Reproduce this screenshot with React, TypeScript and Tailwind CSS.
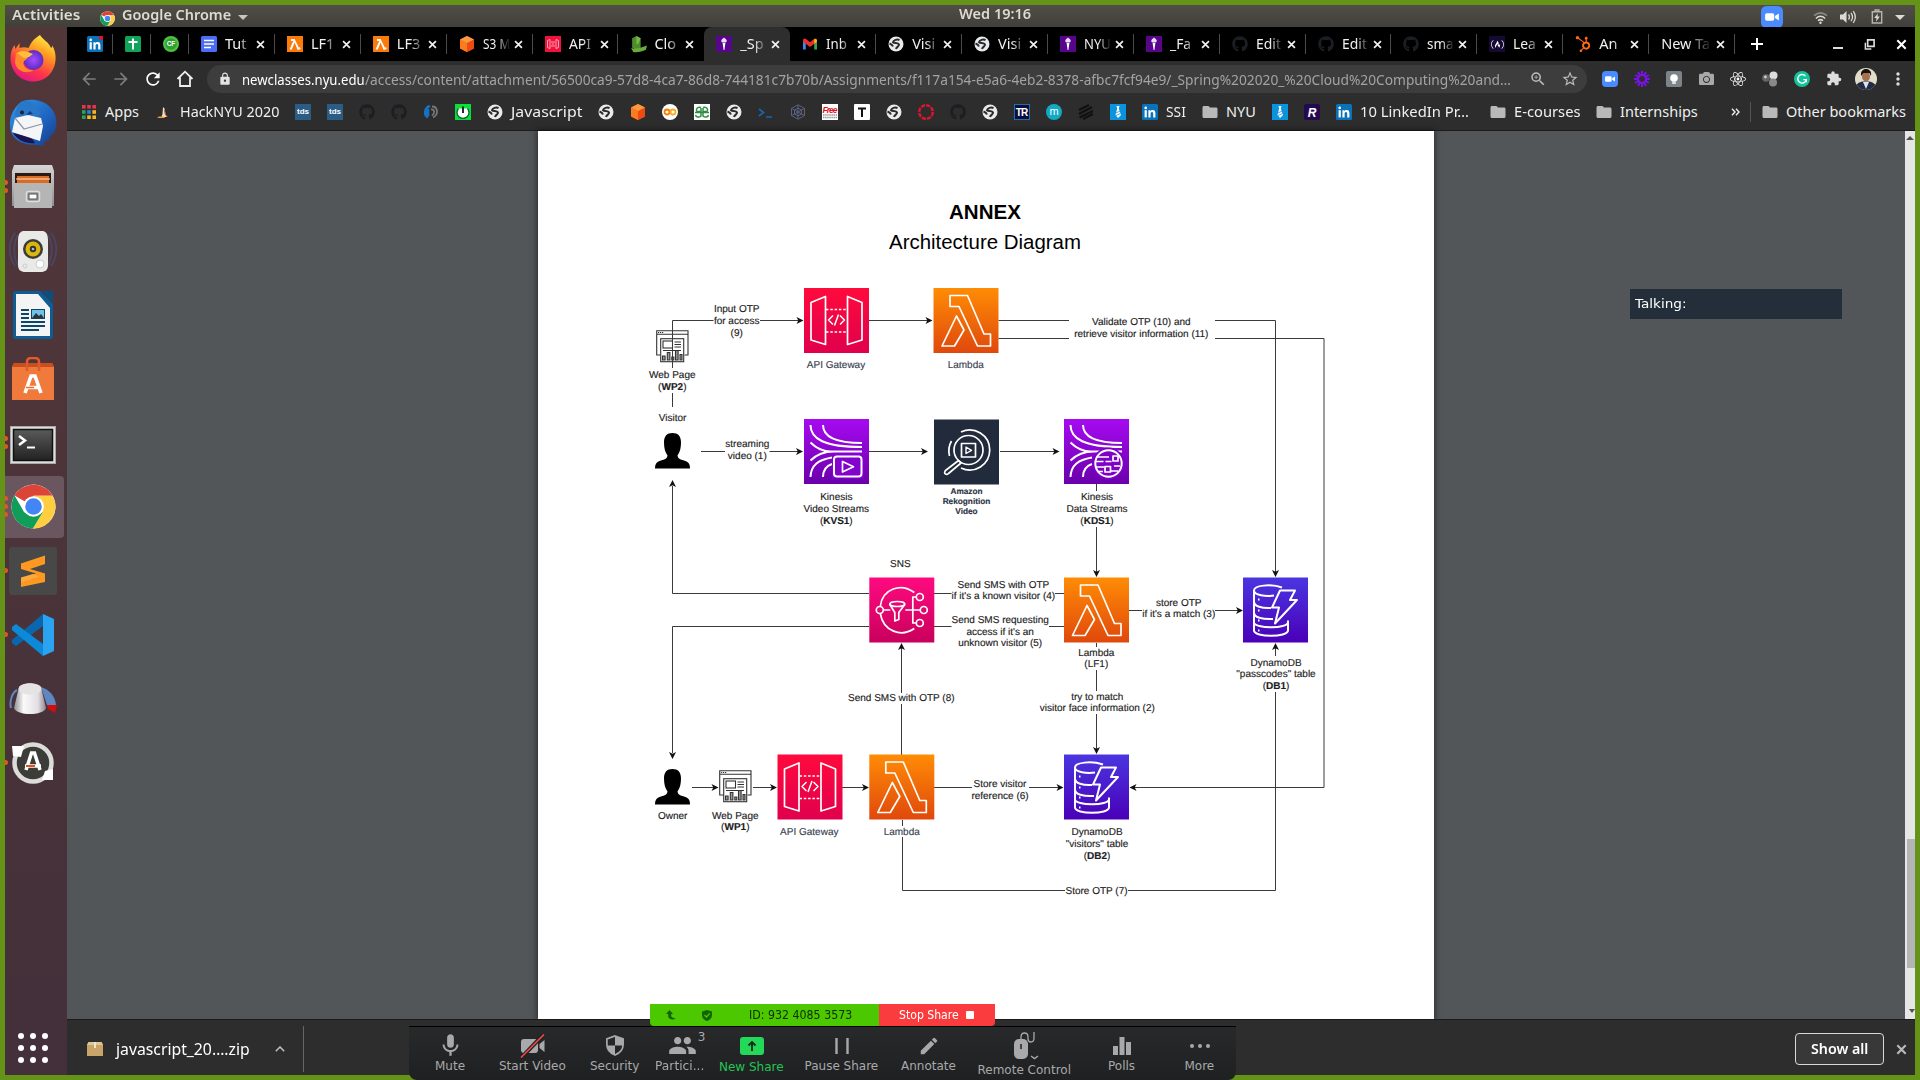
import React, { useLayoutEffect, useRef, useState } from "react";
import { FaGithub, FaReact, FaHubspot, FaFreeCodeCamp, FaCamera } from "react-icons/fa";
import { MdArrowBack, MdArrowForward, MdRefresh, MdLock, MdZoomIn, MdStarBorder, MdMoreVert, MdExtension, MdFolder, MdMic, MdPeople, MdEdit } from "react-icons/md";

/* Single-line text condensed or expanded horizontally to an exact width. */
function Fit({ w, className = "", children }: { w: number; className?: string; children: React.ReactNode }) {
  const ref = useRef<HTMLSpanElement>(null);
  const [scale, setScale] = useState(1);
  useLayoutEffect(() => {
    const el = ref.current;
    if (el && el.offsetWidth > 0) setScale(w / el.offsetWidth);
  }, [w]);
  return (
    <span className="inline-block shrink-0" style={{ width: w }}>
      <span ref={ref} className={"inline-block origin-left whitespace-nowrap " + className} style={{ transform: `scaleX(${scale})` }}>
        {children}
      </span>
    </span>
  );
}

/* ---------- small favicons (16x16) ---------- */
const Svg16 = ({ children, s = "size-4" }: { children: React.ReactNode; s?: string }) => (
  <svg viewBox="0 0 16 16" className={s + " shrink-0"}>{children}</svg>
);
const LinkedIn = ({ dot }: { dot?: boolean }) => (
  <Svg16>
    <rect width="16" height="16" rx="1.5" fill="#0a72b8" />
    <rect x="2.6" y="6.2" width="2.2" height="7.2" fill="#fff" />
    <circle cx="3.7" cy="3.9" r="1.3" fill="#fff" />
    <path d="M6.4 6.2h2.1v1c.4-.7 1.2-1.2 2.2-1.2 2 0 2.7 1.2 2.7 3.3v4.1h-2.2V9.8c0-1-.3-1.8-1.2-1.8-1 0-1.4.8-1.4 1.8v3.6H6.4z" fill="#fff" />
    {dot && <circle cx="14" cy="1.8" r="2.2" fill="#e8112d" />}
  </Svg16>
);
const Sheets = () => (
  <Svg16><rect width="16" height="16" rx="1.5" fill="#0fa45a" /><path d="M8 2.5v11M3.5 6h9" stroke="#fff" strokeWidth="2" /></Svg16>
);
const CF = () => (
  <Svg16><circle cx="8" cy="8" r="8" fill="#4fc23f" /><circle cx="8" cy="8" r="5.800" fill="#2f9e35" /><text x="8" y="10.4" textAnchor="middle" fontSize="6.5" fontWeight="bold" fill="#fff" fontFamily="Liberation Sans">CF</text></Svg16>
);
const Docs = () => (
  <Svg16><rect width="16" height="16" rx="1.5" fill="#4a6cf7" /><path d="M3 4.5h10M3 8h10M3 11.5h7" stroke="#fff" strokeWidth="1.7" /></Svg16>
);
const LambdaFav = () => (
  <Svg16><rect width="16" height="16" fill="#fa7a0a" /><path d="M4 3h3.6l4.2 8.6 1.3-.4.6 1.8-3 1L7.600 6.500 4.800 13.500H2.500L6.300 5H4z" fill="#fff" /></Svg16>
);
const S3 = () => (
  <Svg16><path d="M8 0l7 3.600v8.800L8 16l-7-3.600V3.600z" fill="#f4511e" /><path d="M8 0l7 3.600-7 3.600-7-3.600z" fill="#fb9a3c" /><path d="M8 7.200l7-3.600v8.800L8 16z" fill="#ee4b12" /><path d="M1 3.600l7 3.600V16l-7-3.600z" fill="#fb7c1e" /></Svg16>
);
const ApiFav = () => (
  <Svg16><rect width="16" height="16" fill="#f0123c" /><path d="M5 3.500L2.500 4.500v7L5 12.500zM11 3.500l2.500 1v7l-2.500 1zM6 6h4M6 10h4M6.800 8h2.400" stroke="#ffb0bd" strokeWidth=".9" fill="none" /></Svg16>
);
const CloudFav = () => (
  <Svg16 s="size-[17px]"><path d="M6 0l4 2v9L6 13 2 11V2z" fill="#4b8f2c" /><path d="M6 0l4 2-2 5-2 1z" fill="#7ab648" /><path d="M1 11c4 2 10 0 15-2l-1 4c-4 2-9 3-12 2z" fill="#69ac3c" /></Svg16>
);
const Torch = () => (
  <Svg16><rect width="16" height="16" fill="#57068c" /><path d="M8 1.500c1 1 2.200 1.200 2.400 2.600.8.300.5 1.800-.6 2.300H6.200C5 5.900 4.900 4.600 5.700 4.100 5.700 2.900 7.200 2.800 8 1.500z" fill="#e9dcf2" /><path d="M6.600 7h2.800L8.400 14h-.8z" fill="#fff" /></Svg16>
);
const Gmail = () => (
  <Svg16><path d="M1 4v9.500h2.800V6.200z" fill="#4285f4" /><path d="M15 4v9.500h-2.800V6.200z" fill="#34a853" /><path d="M1 4.200C1 2.400 3 2 4 3l4 3.200L12 3c1-1 3-.6 3 1.200v1.500L8 11 1 5.700z" fill="#ea2f2f" /><path d="M12.200 3l2 .3.800 1v1.500l-2.800 2z" fill="#fbbc04" /></Svg16>
);
const Globe = () => (
  <Svg16><circle cx="8" cy="8" r="7.500" fill="#e8eaed" /><path d="M11.500 4C9 2.800 5.500 4 5 6.200c1.500 1.300 5 .3 6 2.300.3 2-2.500 2-3 4.500M1.500 7.500C3 8 4.500 9 5 10.500" fill="none" stroke="#2a2a2a" strokeWidth="2" /></Svg16>
);
const Git = () => <FaGithub className="size-4 shrink-0 text-[#1b1f23]" />;
const FCC = () => (
  <span className="flex size-4 shrink-0 items-center justify-center bg-[#150a33] text-white"><FaFreeCodeCamp className="size-[13px]" /></span>
);

/* ---------- tab strip ---------- */
const tabs: { icon?: React.ReactNode; t: string; w: number; active?: boolean; noSep?: boolean }[] = [
  { icon: <Docs />, t: "Tut", w: 22 },
  { icon: <LambdaFav />, t: "LF1", w: 23 },
  { icon: <LambdaFav />, t: "LF3", w: 23 },
  { icon: <S3 />, t: "S3 M", w: 27 },
  { icon: <ApiFav />, t: "API", w: 22 },
  { icon: <CloudFav />, t: "Clo", w: 22, noSep: true },
  { icon: <Torch />, t: "_Sp", w: 23, active: true, noSep: true },
  { icon: <Gmail />, t: "Inb", w: 21 },
  { icon: <Globe />, t: "Visi", w: 23 },
  { icon: <Globe />, t: "Visi", w: 23 },
  { icon: <Torch />, t: "NYU", w: 27 },
  { icon: <Torch />, t: "_Fa", w: 21 },
  { icon: <Git />, t: "Edit", w: 25 },
  { icon: <Git />, t: "Edit", w: 25 },
  { icon: <Git />, t: "sma", w: 27 },
  { icon: <FCC />, t: "Lea", w: 23 },
  { icon: <FaHubspot className="size-4 shrink-0 text-[#ff6a13]" />, t: "An", w: 18 },
  { t: "New Ta", w: 49 },
];
const Cross = ({ c = "size-[9px]" }: { c?: string }) => (
  <svg viewBox="0 0 10 10" className={c + " shrink-0"}><path d="M1.200 1.200l7.600 7.600M8.800 1.200L1.200 8.800" stroke="currentColor" strokeWidth="1.900" /></svg>
);
function TabStrip() {
  return (
    <div className="flex h-[34px] shrink-0 items-center bg-black pl-2 font-['Noto_Sans',sans-serif] text-[14.500px] text-[#f1f1f1]">
      {[<LinkedIn dot />, <Sheets />, <CF />].map((ic, i) => (
        <div key={i} className="flex h-5 w-[38px] shrink-0 items-center justify-center border-r border-[#4a4a4a] pl-0.5">{ic}</div>
      ))}
      {tabs.map((t, i) => (
        <div key={i} className={"flex h-full w-[85.900px] shrink-0 items-center " + (t.active ? "rounded-t-lg bg-[#2e2e2e]" : "")}>
          <div className={"flex h-5 w-full items-center border-r pl-3 " + (t.noSep ? "border-transparent" : "border-[#4a4a4a]")}>
            {t.icon && <span className="mr-2 flex w-4 shrink-0">{t.icon}</span>}
            <span className={"flex [mask-image:linear-gradient(to_right,black_50%,transparent_98%)] " + (t.icon ? "w-[28px]" : "w-[52px]")}><Fit w={t.w}>{t.t}</Fit></span>
            <span className="ml-[3px] flex"><Cross /></span>
          </div>
        </div>
      ))}
      <svg viewBox="0 0 12 12" className="ml-4 size-3 shrink-0"><path d="M6 0v12M0 6h12" stroke="#fff" strokeWidth="2" /></svg>
      <div className="ml-auto flex items-center pr-2 text-white">
        <div className="mt-2 h-[2px] w-2.5 bg-[#ddd]" />
        <svg viewBox="0 0 12 12" className="mx-[21px] size-[11px]"><path d="M4 1h7v7H4z" fill="none" stroke="#ddd" strokeWidth="1.800" /><path d="M1.500 4v6.800H8" fill="none" stroke="#ddd" strokeWidth="1.600" /></svg>
        <Cross c="size-[11px]" />
      </div>
    </div>
  );
}

/* ---------- toolbar ---------- */
const ZoomFav = ({ s = "size-4" }: { s?: string }) => (
  <Svg16 s={s}><rect width="16" height="16" rx="4" fill="#4a8cff" /><rect x="3" y="5.300" width="6.600" height="5.400" rx="1.200" fill="#fff" /><path d="M10.200 7.200l2.800-1.800v5.200l-2.800-1.800z" fill="#fff" /></Svg16>
);
function Toolbar() {
  const ext = [
    <ZoomFav />,
    <Svg16><g stroke="#7a12e8" strokeWidth="2">{[0, 30, 60, 90, 120, 150].map((a) => <path key={a} d="M8 0v5M8 11v5" transform={`rotate(${a} 8 8)`} />)}</g><circle cx="8" cy="8" r="4" fill="none" stroke="#7a12e8" strokeWidth="2" /></Svg16>,
    <Svg16><rect width="16" height="16" rx="2" fill="#7d8489" /><circle cx="8" cy="7" r="3.800" fill="#fff" /><path d="M6.200 10h3.600v3H6.200z" fill="#dfe3e6" /></Svg16>,
    <FaCamera className="size-[15px] text-[#a8a8a8]" />,
    <FaReact className="size-4 text-white" />,
    <Svg16><circle cx="4" cy="7" r="3.800" fill="#666" /><circle cx="3.400" cy="6" r="1.400" fill="#ccc" /><circle cx="11.500" cy="4.500" r="4" fill="#ddd" /><circle cx="11" cy="11.500" r="4" fill="#888" /></Svg16>,
    <Svg16><circle cx="8" cy="8" r="8" fill="#15c39a" /><path d="M11.500 5.200A4.300 4.300 0 1 0 12.300 8.600H9.400M12.300 8.600v2.600" fill="none" stroke="#fff" strokeWidth="1.400" /></Svg16>,
    <MdExtension className="size-[17px] text-[#ddd]" />,
  ];
  return (
    <div className="flex h-9 shrink-0 items-center bg-[#2d2d2d] pb-px font-['Noto_Sans',sans-serif]">
      <MdArrowBack className="ml-3 size-5 text-[#7c7c7c]" />
      <MdArrowForward className="ml-3 size-5 text-[#7c7c7c]" />
      <MdRefresh className="ml-3 size-5 text-white" />
      <svg viewBox="0 0 20 20" className="ml-3 size-5"><path d="M2.500 10L10 2.700 17.500 10M5 8.500V17h10V8.500" fill="none" stroke="#eee" strokeWidth="1.800" /></svg>
      <div className="ml-3 flex h-7 w-[1380px] items-center rounded-full bg-[#3d3d3d] pr-2 pl-[11px]">
        <MdLock className="size-[14px] text-[#e4e4e4]" />
        <span className="ml-[10px] flex">
          <Fit w={123} className="text-[14px] text-white">newclasses.nyu.edu</Fit>
          <Fit w={1146} className="text-[14px] text-[#a3a3a3]">/access/content/attachment/56500ca9-57d8-4ca7-86d8-744181c7b70b/Assignments/f117a154-e5a6-4eb2-8378-afbc7fcf94e9/_Spring%202020_%20Cloud%20Computing%20and…</Fit>
        </span>
        <MdZoomIn className="ml-auto size-[18px] text-[#bbb]" />
        <MdStarBorder className="ml-[14px] size-[18px] text-[#bbb]" />
      </div>
      <div className="ml-[15px] flex items-center gap-4">
        {ext.map((e, i) => <span key={i} className="flex size-4 items-center justify-center">{e}</span>)}
      </div>
      <svg viewBox="0 0 22 22" className="ml-[13px] size-[22px]">
        <clipPath id="avatar"><circle cx="11" cy="11" r="11" /></clipPath>
        <g clipPath="url(#avatar)"><rect width="22" height="22" fill="#e2ddc8" /><path d="M0 22c0-6 4-8 8-8.500h6c4 .5 8 3 8 8.500z" fill="#232c44" /><path d="M8 14l3 7 3-7z" fill="#dbe4f5" /><ellipse cx="11" cy="8.500" rx="4" ry="5" fill="#a66f4e" /><path d="M6 8c-.5-5 2-7 5-7s6 2 5 7l-1.500-3h-6z" fill="#17110f" /></g>
      </svg>
      <MdMoreVert className="ml-[11px] size-5 text-[#ddd]" />
    </div>
  );
}

/* ---------- bookmarks ---------- */
const Tds = () => <span className="flex size-4 items-center justify-center bg-[#2b5c85] font-['Liberation_Sans',sans-serif] text-[8px] font-bold text-white">tds</span>;
const BlueTie = () => <Svg16><rect width="16" height="16" fill="#0b93de" /><path d="M6.500 2h3l-.7 2.500L11 11l-3 3-2.500-3L7.200 4.500z" fill="#fff" /><path d="M6 9l4-2M6 11.500l4.500-2" stroke="#0b93de" strokeWidth=".8" /></Svg16>;
const Folder = () => <MdFolder className="size-[18px] shrink-0 text-[#b9b9b9]" />;
const marks: { i: React.ReactNode; t?: string; w?: number; pad?: string }[] = [
  { pad: "pr-px", i: <Svg16>{["#e8344a", "#e8344a", "#e8344a", "#26a65b", "#2f7de1", "#f5b81c", "#26a65b", "#f5b81c", "#f5b81c"].map((c, k) => <rect key={k} x={1 + (k % 3) * 5.200} y={1 + Math.floor(k / 3) * 5.200} width="3.600" height="3.600" fill={c} />)}</Svg16>, t: "Apps", w: 34 },
  { i: <Svg16><path d="M7 3l1.500 1.500 1 6 1.500 2.500H5.500l1-3z" fill="#f2e3c4" /><path d="M1 14h8l-1-1.500H3z" fill="#e8a33d" /><path d="M8.500 6l.8 4.500 2.200 2.500" stroke="#b3532a" fill="none" /></Svg16>, t: "HackNYU 2020", w: 99 },
  { i: <Tds /> }, { i: <Tds /> }, { i: <Git /> }, { i: <Git /> },
  { i: <Svg16><path d="M7 2C1 4 1 11 5 13.500M5 5v7" fill="none" stroke="#1673c4" strokeWidth="2.600" /><path d="M9 2.500c6 0 7 8 1 11M8 5.500c4-.5 4 4 1 6" fill="none" stroke="#777" strokeWidth="1.800" /></Svg16> },
  { i: <Svg16><rect width="16" height="16" fill="#0be03a" /><path d="M3.500 4.500a6 6 0 1 0 9 0" fill="#fff" stroke="#063" strokeWidth="1.300" /><path d="M8 2.500v6.500" stroke="#111" strokeWidth="1.800" /></Svg16> },
  { i: <Globe />, t: "Javascript", w: 71 },
  { i: <Globe /> }, { i: <S3 /> },
  { i: <Svg16><circle cx="8" cy="8" r="8" fill="#fff" /><circle cx="5" cy="8" r="2.500" fill="none" stroke="#f57c00" strokeWidth="1.800" /><circle cx="11" cy="8" r="2.500" fill="none" stroke="#fbab1c" strokeWidth="1.800" /></Svg16> },
  { i: <Svg16><rect width="16" height="16" fill="#fff" /><path d="M7 3.500C3 2 1.500 6 3 7.500h4V4M7 9v3C5 14 2 13 1.500 11M9 3.500c4-1.500 5.500 2.500 4 4H9V4M9 9v3c2 2 5 1 5.500-1M1 8.500h14" fill="none" stroke="#2f8d46" strokeWidth="1.500" /></Svg16> },
  { i: <Globe /> },
  { i: <Svg16><path d="M1 5l4.500 3.500L1 12" fill="none" stroke="#1864ab" strokeWidth="1.800" /><path d="M8 13h6" stroke="#1864ab" strokeWidth="1.500" /></Svg16> },
  { i: <Svg16><path d="M8 .8l6.500 3.600v7.200L8 15.200l-6.500-3.600V4.400zM8 4l3.500 2v4L8 12l-3.500-2V6zM1.500 4.400l13 7.200M14.500 4.400l-13 7.200M8 1v14" fill="none" stroke="#5b6080" strokeWidth="1" /></Svg16> },
  { i: <Svg16><rect width="16" height="16" fill="#fff" /><text x="8" y="8.500" textAnchor="middle" textLength="15" fontSize="8.500" fontWeight="bold" fontStyle="italic" fill="#e01020" fontFamily="Liberation Sans">Free</text><path d="M1 11h14M1 13.500h14" stroke="#999" strokeWidth="1.400" strokeDasharray="1.500 .6" /></Svg16> },
  { i: <Svg16><rect width="16" height="16" rx="1" fill="#fff" /><path d="M4 4.500h8M8 4.500V13" stroke="#111" strokeWidth="2" /></Svg16> },
  { i: <Globe /> },
  { i: <Svg16><circle cx="8" cy="8" r="6.800" fill="none" stroke="#e0142d" strokeWidth="2.400" strokeDasharray="4.200 1.140" /></Svg16> },
  { i: <Git /> }, { i: <Globe /> },
  { i: <Svg16><rect x=".5" y=".5" width="15" height="15" fill="#0d0c3a" stroke="#1f6fa8" /><text x="8" y="11.800" textAnchor="middle" fontSize="10" fontWeight="bold" fill="#fff" fontFamily="Liberation Sans" textLength="12.500">TR</text></Svg16> },
  { i: <Svg16><circle cx="8" cy="8" r="8" fill="#12a9c4" /><text x="8" y="11.300" textAnchor="middle" fontSize="11" fill="#fff" fontFamily="Liberation Sans">m</text></Svg16> },
  { i: <Svg16><path d="M1 6l10-5M1 10L14 3M1.500 13.500L15 7M5 15l10-5" stroke="#111" strokeWidth="2" /></Svg16> },
  { i: <BlueTie /> },
  { i: <LinkedIn />, t: "SSI", w: 20 },
  { i: <Folder />, t: "NYU", w: 30 },
  { i: <BlueTie /> },
  { i: <Svg16><rect width="16" height="16" rx="2" fill="#25094f" /><text x="8" y="12.500" textAnchor="middle" fontSize="12" fontWeight="bold" fontStyle="italic" fill="#fff" fontFamily="Liberation Sans">R</text></Svg16> },
  { i: <LinkedIn />, t: "10 LinkedIn Pr…", w: 109, pad: "pr-[5px]" },
  { i: <Folder />, t: "E-courses", w: 66 },
  { i: <Folder />, t: "Internships", w: 78 },
];
function Bookmarks() {
  return (
    <div className="flex h-[34px] shrink-0 items-center gap-4 border-b border-[#1c1c1c] bg-[#2d2d2d] pb-1 pl-[14px] font-['Noto_Sans',sans-serif] text-[14.500px] text-[#f0f0f0]">
      {marks.map((m, k) => (
        <div key={k} className={"flex shrink-0 items-center gap-2 " + (m.pad ?? "")}>
          <span className="flex size-4 items-center justify-center">{m.i}</span>
          {m.t && <Fit w={m.w!}>{m.t}</Fit>}
        </div>
      ))}
      <div className="ml-auto flex items-center pr-[9px]">
        <svg viewBox="0 0 9 8" className="h-2 w-[9px]"><path d="M1 .8L4 4 1 7.200M5 .8L8 4 5 7.200" fill="none" stroke="#eee" strokeWidth="1.400" /></svg>
        <span className="ml-[10px] h-5 w-px bg-[#555]" />
        <span className="mr-[7px] ml-[10px]"><Folder /></span>
        <Fit w={120}>Other bookmarks</Fit>
      </div>
    </div>
  );
}

/* ---------- dock ---------- */
const ChromeLogo = ({ c }: { c: string }) => (
  <svg viewBox="0 0 48 48" className={c}>
    <circle cx="24" cy="24" r="23.500" fill="#fff" />
    <path d="M24 24L3.800 12.200A23.500 23.500 0 0 1 44.300 12.500H24z" fill="#db4437" />
    <path d="M24 12.500h20.300A23.500 23.500 0 0 1 23.300 47.500L34 29.800z" fill="#ffcd40" />
    <path d="M3.800 12.200A23.500 23.500 0 0 0 23.300 47.500L34 29.800 24 34l-10-4z" fill="#0f9d58" />
    <circle cx="24" cy="24" r="11" fill="#fff" /><circle cx="24" cy="24" r="8.800" fill="#4285f4" />
  </svg>
);
const dock: { el: React.ReactNode; dots: number; active?: boolean }[] = [
  { dots: 0, el: (
    <svg viewBox="0 0 48 48" className="size-12">
      <defs><linearGradient id="fx" x1=".8" y1="0" x2=".3" y2="1"><stop offset="0" stopColor="#fff24a" /><stop offset=".35" stopColor="#ff9a1f" /><stop offset=".7" stopColor="#ff3647" /><stop offset="1" stopColor="#e31587" /></linearGradient>
        <radialGradient id="fxp"><stop offset="0" stopColor="#a64dff" /><stop offset="1" stopColor="#5b2bc4" /></radialGradient></defs>
      <path d="M31 0c3 5 9 7 11 13 2-1 1-3 1-3 3 5 4 10 3.500 15C45.500 38 36 46.500 24 46.500S2 37 1.500 24c0-6 1-10 4-14l1 4c1-2 3-4 4-6v5c3-1 6-1 9 0 3-6 5-9 11.500-13z" fill="url(#fx)" />
      <circle cx="24.500" cy="25" r="10" fill="url(#fxp)" />
      <path d="M7 18c6-3 11-2 16 1l-4 3c-1 3-4 3-5 6 1 5 6 8 11 7-8 5-18 1-19-8z" fill="#ff8a2a" /><path d="M8 18c5-3 10-2 16 1l-4 3-5 1z" fill="#ffc13d" />
    </svg>) },
  { dots: 0, el: (
    <svg viewBox="0 0 48 48" className="size-12">
      <defs><linearGradient id="tb" x1="0" y1="0" x2="1" y2="1"><stop offset="0" stopColor="#2f9ae8" /><stop offset=".6" stopColor="#1f62bd" /><stop offset="1" stopColor="#123a86" /></linearGradient></defs>
      <path d="M12 3C20-1 34 0 42 9c6 7 7 17 3 25l-4 3-1 4-5 2-1 4-6-1c-12 0-22-3-26-13C-1 22 2 11 12 3z" fill="url(#tb)" />
      <path d="M12 3c12-4 16 6 20 13L6 21C6 13 7 8 12 3z" fill="#2877c8" />
      <path d="M4 34c5 8 14 11 22 10l-4-6z" fill="#1b1450" />
      <path d="M6 19l13-3 13 3 2 8-3 15L3 33z" fill="#f4f5f7" /><path d="M6 19l9 11 18-5" fill="none" stroke="#8f98a3" strokeWidth="1.200" />
      <circle cx="13" cy="13.500" r="2" fill="#222" /><path d="M17 16l4-4 3 3z" fill="#123a86" />
    </svg>) },
  { dots: 2, el: (
    <svg viewBox="0 0 42 43" className="h-[43px] w-[42px]">
      <defs><linearGradient id="cab" x1="0" y1="0" x2="0" y2="1"><stop offset="0" stopColor="#d6d6d6" /><stop offset="1" stopColor="#8f8f8f" /></linearGradient></defs>
      <path d="M2 0h38l2 6v35H0V6z" fill="url(#cab)" /><rect x="3" y="8" width="36" height="10" fill="#2b1a12" /><path d="M5 11h32v7H5z" fill="#d96b22" /><path d="M4 14h34" stroke="#ffe1c4" strokeWidth="1.200" />
      <path d="M2 18h38v25H2z" fill="#b5b5b5" /><rect x="14.500" y="26.500" width="13" height="10" rx="2" fill="#999" stroke="#dedede" strokeWidth="1.500" /><rect x="17" y="29" width="8" height="5" fill="#fff" stroke="#555" />
    </svg>) },
  { dots: 0, el: (
    <svg viewBox="0 0 48 44" className="h-11 w-12">
      <path d="M6 4C-1 13-1 27 6 37M9 6c-5 8-5 22 0 30M42 4c7 9 7 23 0 33M39 6c5 8 5 22 0 30" fill="none" stroke="#4a4560" strokeWidth="2" />
      <path d="M14 2h20c4 1 5 5 5 10v24c0 5-3 7-7 7H16c-4 0-7-2-7-7V12c0-5 1-9 5-10z" fill="#e9e9e7" /><circle cx="24" cy="20" r="10" fill="#3b3b38" /><circle cx="24" cy="20" r="7.500" fill="#d8b70f" /><circle cx="24" cy="20" r="3.200" fill="#333" /><circle cx="24" cy="20" r="1.300" fill="#bbb" /><circle cx="31" cy="35" r="4" fill="#fff" stroke="#ccc" /><circle cx="16" cy="37" r="2" fill="none" stroke="#ccc" />
    </svg>) },
  { dots: 0, el: (
    <svg viewBox="0 0 40 48" className="h-12 w-10">
      <path d="M3 0h24l13 13v33a2 2 0 0 1-2 2H2a2 2 0 0 1-2-2V3a3 3 0 0 1 3-3z" fill="#0d5c94" /><path d="M3 3h22l12 14v28H3z" fill="#f4f4f4" /><path d="M28 0h12v12z" fill="#0b4f80" />
      <path d="M8 19h8M8 23h8M8 27h8M8 31h24M8 35h24M8 39h18" stroke="#0e4669" strokeWidth="1.800" /><rect x="18.500" y="18.500" width="13" height="9" fill="#6fc2ea" stroke="#0e4669" /><path d="M19 27l4-5 3 3 2-2 3 4z" fill="#333" />
    </svg>) },
  { dots: 0, el: (
    <svg viewBox="0 0 42 43" className="h-[43px] w-[42px]">
      <path d="M2 6h38l2 4v33H0V10z" fill="#ef7a3c" /><path d="M2 6h38l2 4H0z" fill="#c9501e" /><path d="M15 14V5q0-4 4-4h4q4 0 4 4v9" fill="none" stroke="#e4592a" strokeWidth="2.500" />
      <path d="M13 36l6-17h4l6 17M14 30.500h14" fill="none" stroke="#fff" strokeWidth="3.600" /><path d="M14 30.500h8" stroke="#ef6a2c" strokeWidth="1.500" />
    </svg>) },
  { dots: 2, el: (
    <svg viewBox="0 0 46 38" className="mt-1 h-[38px] w-[46px]">
      <defs><linearGradient id="term" x1="0" y1="0" x2="0" y2="1"><stop offset="0" stopColor="#5a5a5a" /><stop offset="1" stopColor="#222" /></linearGradient></defs>
      <rect x=".5" y=".5" width="45" height="37" fill="#ddd" stroke="#aaa" /><rect x="3.500" y="3.500" width="39" height="31" fill="url(#term)" stroke="#111" strokeWidth="1.500" /><path d="M9 10l6 4.500L9 19" fill="none" stroke="#fff" strokeWidth="2.500" /><path d="M17 21.500h8" stroke="#fff" strokeWidth="2" />
    </svg>) },
  { dots: 3, active: true, el: <ChromeLogo c="size-[45px]" /> },
  { dots: 1, el: (
    <svg viewBox="0 0 48 48" className="size-12"><rect width="48" height="48" rx="3" fill="#484848" /><path d="M12 16.500l24-8V17l-15 5 15 4.500v8.500L12 40v-8.500l15-5-15-4.500z" fill="#ff9820" /><path d="M12 30.500L24 27l6 2.500-18 6z" fill="#ffa93d" /></svg>) },
  { dots: 1, el: (
    <svg viewBox="0 0 42 42" className="size-[42px]"><path d="M31 0v12L4 32l-4-3v-3z" fill="#0a66ad" /><path d="M31 42V30L4 10l-4 3v3z" fill="#0c8ad8" /><path d="M31 0l11 5v32l-11 5z" fill="#2aa3f0" /></svg>) },
  { dots: 0, el: (
    <svg viewBox="0 0 48 34" className="h-[34px] w-12">
      <defs><linearGradient id="knob" x1="0" x2="1"><stop offset="0" stopColor="#8f8f93" /><stop offset=".3" stopColor="#fafafa" /><stop offset=".75" stopColor="#e2dde2" /><stop offset="1" stopColor="#8a868c" /></linearGradient></defs>
      <path d="M2 26C0 18 4 10 8 8" fill="none" stroke="#5f88c0" strokeWidth="2" /><path d="M32 5c9 3 14 9 15 18h-9z" fill="#5f88c0" /><path d="M38 23h10l-2 8-7-4z" fill="#d10d0d" /><path d="M10 5c4-5 18-5 22 0l5 21c-3 8-29 8-32 0z" fill="url(#knob)" /><ellipse cx="21" cy="7" rx="11.500" ry="5.500" fill="#e4e4e4" />
    </svg>) },
  { dots: 1, el: (
    <svg viewBox="0 0 44 44" className="size-11"><circle cx="22" cy="22" r="18.500" fill="#3c3c38" stroke="#dcdcda" strokeWidth="4.500" /><path d="M1 5l12 0-3 11L2 15zM42 39H31l3-9 8-2z" fill="#fff" /><path d="M15 29l5.500-17h3L29 29M14 25h16" fill="none" stroke="#fff" strokeWidth="3.500" /><path d="M15 25h9" stroke="#e4521b" strokeWidth="2" /></svg>) },
];
function Dock() {
  return (
    <div className="flex w-[62px] shrink-0 flex-col bg-gradient-to-b from-[#523739] to-[#43303a]">
      {dock.map((d, i) => (
        <div key={i} className="flex h-16 items-center pb-px">
          <div className={"flex h-[62px] items-center " + (d.active ? "w-[59px] rounded-r bg-[#6a565e]" : "w-[59px]")}>
            <div className="flex w-[3px] flex-col gap-[3px]">
              {Array.from({ length: d.dots }).map((_, k) => <span key={k} className="h-[5px] w-[3px] rounded-r-full bg-[#e95420]" />)}
            </div>
            <div className="flex w-[50px] items-center justify-center">{d.el}</div>
          </div>
        </div>
      ))}
      <div className="mt-auto mb-3 ml-[13px] grid w-[30px] grid-cols-3 gap-1.5">
        {Array.from({ length: 9 }).map((_, k) => <span key={k} className="size-1.5 rounded-full bg-white" />)}
      </div>
    </div>
  );
}

/* ---------- architecture diagram ---------- */
function Label({ x, y, lines, fill = "#1c1c1c", size = 10, step = 11.65, bold = false }: { x: number; y: number; lines: string[]; fill?: string; size?: number; step?: number; bold?: boolean }) {
  return (
    <g fontSize={size} fill={fill} textAnchor="middle" fontFamily="'Liberation Sans', sans-serif" fontWeight={bold ? "bold" : "normal"} textRendering="geometricPrecision" stroke={fill} strokeWidth=".15">
      {lines.map((l, i) => {
        const m = /^\(\*(.+)\*\)$/.exec(l);
        return <text key={i} x={x} y={y - 0.4 + i * step}>{m ? <>(<tspan fontWeight="bold">{m[1]}</tspan>)</> : l}</text>;
      })}
    </g>
  );
}
function Arrow({ x, y, r }: { x: number; y: number; r: number }) {
  return <path d="M0 0L-7 -3.500L-5.200 0L-7 3.500z" transform={`translate(${x} ${y}) rotate(${r})`} fill="#111" />;
}
const Line = ({ d }: { d: string }) => <path d={d} fill="none" stroke="#3a3a3a" strokeWidth="1" />;
function Tile({ x, y, fill, children }: { x: number; y: number; fill: string; children: React.ReactNode }) {
  return (
    <g transform={`translate(${x} ${y})`}>
      <rect width="65" height="65" fill={fill} />
      <g fill="none" stroke="#fff" strokeWidth="1.700" strokeLinejoin="round">{children}</g>
    </g>
  );
}
const ApiGw = ({ x, y }: { x: number; y: number }) => (
  <Tile x={x} y={y} fill="url(#gRed)">
    <path d="M7 14.500L21.500 8.500v48L7 52zM58 14.500L43.500 8.500v48L58 52z" /><path d="M22 21.500h21M22 44h21" strokeDasharray="2.500 1.800" /><path d="M29 27.500l-4.500 4.500 4.500 4.500M36 27.500l4.500 4.500-4.500 4.500M34.500 26.500l-4 11" strokeWidth="1.500" />
  </Tile>
);
const Lambda = ({ x, y }: { x: number; y: number }) => (
  <Tile x={x} y={y} fill="url(#gOrange)">
    <path d="M16.500 7.500H34L50.500 46h6.500v12H44L25.500 18.500h-9z" /><path d="M23 28l7.500 14-9.500 16H8.500z" />
  </Tile>
);
const streams = <path d="M6.500 6c0 14 14 22 51.500 22M19 6c0 11 12 18 39 18M6.500 23.500C14 31 20 32.500 27 32.500H58M6.500 41.500C14 34 22 32.500 30 32.500M6.500 58C7 46 14 41 28 38.500M19 58c0-7 3-11 9-13" strokeWidth="2" />;
const Dynamo = ({ x, y }: { x: number; y: number }) => (
  <Tile x={x} y={y} fill="url(#gBlue)">
    <path d="M39 10c-12-4-28-2-28 3v40c0 7 34 7 34 0V43M11 13c0 5 12 6 20 5M11 24c0 5 8 7 17 6.500M11 35c0 5 8 7 19 6.500M11 45c0 6 34 7 34-.5" strokeWidth="2" /><path d="M37 13h15l-5 9.500h7L32 46l4-16h-7z" strokeWidth="2" />
    <path d="M15 22h1.500M15 33h1.500M15 43h1.500M15 53h1.500" strokeWidth="2" />
  </Tile>
);
const Person = ({ x, y }: { x: number; y: number }) => (
  <path transform={`translate(${x} ${y})`} d="M0 35.500c0-5 2-7 6-8 4-1 6-2 6.500-5C10 19 9 15 9 9.500 9 3 12 0 17.500 0S26 3 26 9.500c0 5.500-1 9.500-3.500 13 .5 3 2.500 4 6.500 5 4 1 6 3 6 8z" fill="#000" />
);
const WebPage = ({ x, y }: { x: number; y: number }) => (
  <g transform={`translate(${x} ${y})`} fill="none" stroke="#333" strokeWidth="1.100">
    <path d="M4.500 25H.7V.7H32V25h-3.500M.7 4.200H32" /><path d="M2 2.500h6" strokeDasharray="1.200 .8" />
    <rect x="4.700" y="8.700" width="23" height="23" fill="#fff" /><rect x="7" y="11" width="9.500" height="7" /><path d="M18.500 12H25M18.500 14.500H25M18.500 17H25M7 20.500h18" strokeWidth="1" />
    <path d="M6.500 30v-4h2.600v4zM11.300 30v-7.500h2.600V30zM15.800 30v-3h2v3zM19.500 30V20.500h2.600V30zM24 30v-5.500h2V30z" fill="#999" />
  </g>
);
function Diagram() {
  return (
    <svg viewBox="538 131 896 888" className="h-[888px] w-[896px]">
      <defs>
        {[["gRed", "#ff0a3c", "#e0004d"], ["gOrange", "#ff8c05", "#e0480c"], ["gPurple", "#a60af0", "#6a00ab"], ["gPink", "#ff0a80", "#c9005c"], ["gBlue", "#4a36e0", "#4a00b8"]].map(([id, a, b]) => (
          <linearGradient key={id} id={id} x1="0" y1="0" x2="0" y2="1"><stop offset="0" stopColor={a} /><stop offset="1" stopColor={b} /></linearGradient>
        ))}
      </defs>
      <text x="985" y="219" textAnchor="middle" fontFamily="'Liberation Sans', sans-serif" fontWeight="bold" fontSize="20.500" textLength="72" lengthAdjust="spacingAndGlyphs">ANNEX</text>
      <text x="985" y="248.500" textAnchor="middle" fontFamily="'Liberation Sans', sans-serif" fontSize="20.500" textLength="192" lengthAdjust="spacingAndGlyphs">Architecture Diagram</text>

      <WebPage x={656} y={330} />
      <WebPage x={719} y={770} />
      <Line d="M672.500 368V320.500H713.500M760 320.500H799M869 320.500H928M672.500 393V407" />
      <Line d="M998.500 320.500H1069M1215 320.500H1275.500V572M998.500 338.500H1069M1215 338.500H1324V787.500H1134" />
      <Line d="M701 451.500H725M769.500 451.500H798M869 451.500H923M1000 451.500H1055" />
      <Line d="M672.500 486V593.500H869M934 593.500H951.500M1055 593.500H1064M672.500 753V626.500H869M934 626.500H951.500M1049 626.500H1064" />
      <Line d="M1096.500 484V491M1096.500 527V572M1096.500 643V647M1096.500 670V691M1096.500 714V749M1129 610.500H1142M1215 610.500H1238" />
      <Line d="M901.500 648V693M901.500 704V755M902.500 820V826M902.500 837V890.500H1065M1128 890.500H1275.500V692M1275.500 656V648" />
      <Line d="M692 787.500H714M753 787.500H772M842 787.500H864M934 787.500H972M1029 787.500H1059" />
      <Arrow x={803.5} y={320.5} r={0} /><Arrow x={932.5} y={320.5} r={0} />
      <Arrow x={803} y={451.5} r={0} /><Arrow x={928} y={451.5} r={0} /><Arrow x={1059.5} y={451.5} r={0} />
      <Arrow x={672.5} y={480} r={-90} /><Arrow x={672.5} y={759} r={90} />
      <Arrow x={1096.5} y={577} r={90} /><Arrow x={1096.5} y={754} r={90} /><Arrow x={1275.5} y={577} r={90} />
      <Arrow x={1275.5} y={643} r={-90} /><Arrow x={901.5} y={643} r={-90} /><Arrow x={1243} y={610.5} r={0} />
      <Arrow x={718.5} y={787.5} r={0} /><Arrow x={777} y={787.5} r={0} /><Arrow x={869} y={787.5} r={0} /><Arrow x={1063.5} y={787.5} r={0} /><Arrow x={1129.5} y={787.5} r={180} />

      <ApiGw x={804} y={288} /><Lambda x={933.5} y={288} />
      <Tile x={804} y={419} fill="url(#gPurple)">
        {streams}<rect x="28" y="35.500" width="31.500" height="24" fill="#8203cc" stroke="none" /><rect x="30" y="37.500" width="27.500" height="20" rx="3" strokeWidth="2" /><path d="M38.500 42.500v10.500l11-5.200z" />
      </Tile>
      <Tile x={934} y={419.5} fill="#212b3c">
        <circle cx="34.500" cy="30.500" r="14.500" /><rect x="27.500" y="24" width="14" height="13.500" /><path d="M32 27.500v6.500l5.500-3.200z" strokeWidth="1.400" /><path d="M24.500 41L11.500 51c-2.500 3 1 5 3 3l12.500-10.500z" /><path d="M27 12.500a20 20 0 1 1 0 36M17.500 21.500a20 20 0 0 0-2 15" />
      </Tile>
      <Tile x={1064} y={419} fill="url(#gPurple)">
        {streams}<circle cx="44.500" cy="44.500" r="16" fill="#7e02c6" stroke="none" /><circle cx="44.500" cy="44.500" r="13.200" strokeWidth="2" /><path d="M33 38h12M31.500 42.500h8M41.500 42.500h6M32 48h8M46 52h8M33 52.500h6M49 37h5v5h-5zM41 47.500h5.500v5.500H41zM50 47h6" strokeWidth="1.700" />
      </Tile>
      <Tile x={869.3} y={577.5} fill="url(#gPink)">
        <path d="M45 15C32 5 13 11 11 29M11 36c3 18 21 24 34 15" /><circle cx="10.500" cy="32.500" r="3.500" /><circle cx="50.500" cy="19.500" r="3.500" /><circle cx="54.500" cy="32.500" r="3.500" /><circle cx="50.500" cy="45.500" r="3.500" /><path d="M14 32.500h7M36 32.500h15M47 19.500h-3.500v26H47" /><ellipse cx="28" cy="26.500" rx="7.500" ry="2.500" /><path d="M20.500 27l5 8v8.500l4-1.500V35l6-8" />
      </Tile>
      <Lambda x={1064} y={577.5} /><Dynamo x={1243} y={577.5} />
      <ApiGw x={777.5} y={754.5} /><Lambda x={869.3} y={754.5} /><Dynamo x={1064} y={754.5} />
      <Person x={655} y={433} /><Person x={655} y={769} />

      <Label x={736.7} y={312.7} lines={["Input OTP", "for access", "(9)"]} />
      <Label x={672.3} y={378.5} lines={["Web Page", "(*WP2*)"]} />
      <Label x={672.6} y={421.7} lines={["Visitor"]} />
      <Label x={747.3} y={447.5} lines={["streaming", "video (1)"]} />
      <Label x={836} y={368.7} lines={["API Gateway"]} fill="#3a4252" />
      <Label x={965.7} y={368.7} lines={["Lambda"]} fill="#3a4252" />
      <Label x={836.3} y={500.7} lines={["Kinesis", "Video Streams", "(*KVS1*)"]} />
      <Label x={966.5} y={494} lines={["Amazon", "Rekognition", "Video"]} size={8.25} step={10} bold fill="#2a3244" />
      <Label x={1097} y={500.7} lines={["Kinesis", "Data Streams", "(*KDS1*)"]} />
      <Label x={1141.3} y={325.3} lines={["Validate OTP (10) and", "retrieve visitor information (11)"]} />
      <Label x={900.3} y={567} lines={["SNS"]} />
      <Label x={1003.4} y={588} lines={["Send SMS with OTP", "if it's a known visitor (4)"]} />
      <Label x={1000.2} y={623.5} lines={["Send SMS requesting", "access if it's an", "unknown visitor (5)"]} />
      <Label x={1178.7} y={606} lines={["store OTP", "if it's a match (3)"]} />
      <Label x={1096.3} y={656} lines={["Lambda", "(LF1)"]} />
      <Label x={1097.3} y={700} lines={["try to match", "visitor face information (2)"]} />
      <Label x={1276} y={666} lines={["DynamoDB", "\"passcodes\" table", "(*DB1*)"]} />
      <Label x={1097} y={835.7} lines={["DynamoDB", "\"visitors\" table", "(*DB2*)"]} />
      <Label x={1096.5} y={894.4} lines={["Store OTP (7)"]} />
      <Label x={1000} y={787.3} lines={["Store visitor", "reference (6)"]} />
      <Label x={901.3} y={701.7} lines={["Send SMS with OTP (8)"]} />
      <Label x={901.7} y={835} lines={["Lambda"]} fill="#3a4252" />
      <Label x={809.3} y={835} lines={["API Gateway"]} fill="#3a4252" />
      <Label x={672.7} y={819.8} lines={["Owner"]} />
      <Label x={735.3} y={819} lines={["Web Page", "(*WP1*)"]} />
    </svg>
  );
}

/* ---------- meeting controls ---------- */
const controls: { w: string; icon: React.ReactNode; t: string; tw: number; c?: string; low?: string }[] = [
  { w: "w-[82px]", t: "Mute", tw: 30, icon: <MdMic className="size-[27px]" /> },
  { w: "w-[83px]", t: "Start Video", tw: 67, icon: <svg viewBox="0 0 26 24" className="h-6 w-[26px]"><rect x="1" y="5" width="17" height="14" rx="3" fill="currentColor" /><path d="M19.500 10l5-4v12l-5-4z" fill="currentColor" /><path d="M1 24L24 0" stroke="#202123" strokeWidth="4" /><path d="M1 23.500L24 .5" stroke="#e8484d" strokeWidth="1.700" /></svg> },
  { w: "w-[81px]", t: "Security", tw: 49, icon: <svg viewBox="0 0 20 22" className="h-[21px] w-5"><path d="M10 1l8.500 3v6c0 5.500-3.500 9-8.500 11-5-2-8.500-5.500-8.500-11V4z" fill="none" stroke="currentColor" strokeWidth="1.800" /><path d="M10 1v10h8.500V4zM10 21V11H1.500c0 5 3.500 8 8.500 10z" fill="currentColor" /></svg> },
  { w: "w-[48px]", t: "Partici...", tw: 49, icon: <span className="flex items-start pl-[15px]"><MdPeople className="size-[29px] shrink-0" /><span className="ml-px text-[12px]">3</span></span> },
  { w: "w-[97px]", t: "New Share", tw: 65, c: "text-[#23c552]", low: "pt-px", icon: <svg viewBox="0 0 24 18" className="h-[18px] w-6"><rect width="24" height="18" rx="3" fill="#23d959" /><path d="M12 14V5M8.500 8.500L12 5l3.500 3.500" fill="none" stroke="#1d2b20" strokeWidth="1.900" /></svg> },
  { w: "w-[83px]", t: "Pause Share", tw: 74, icon: <svg viewBox="0 0 16 16" className="size-4"><path d="M2.500 0v16M13.500 0v16" stroke="currentColor" strokeWidth="2.400" /></svg> },
  { w: "w-[91px]", t: "Annotate", tw: 55, icon: <MdEdit className="size-[22px]" /> },
  { w: "w-[101px]", t: "Remote Control", tw: 94, low: "pt-1", icon: <svg viewBox="0 0 28 28" className="size-7"><rect x="3" y="7" width="14" height="20" rx="5" fill="currentColor" /><path d="M10 12v5" stroke="#202123" strokeWidth="1.500" /><path d="M10 7V5q0-4 3.500-4T17 5v2q0 3 3 3t3-4V0" fill="none" stroke="currentColor" strokeWidth="1.300" /><path d="M20 24l3.500 2.500L27 24" fill="none" stroke="currentColor" strokeWidth="1.500" /></svg> },
  { w: "w-[93px]", t: "Polls", tw: 27, icon: <svg viewBox="0 0 18 18" className="size-[18px]"><path d="M0 9h5v9H0zM6.500 0h5v18h-5zM13 5h5v13h-5z" fill="currentColor" /></svg> },
  { w: "w-[63px]", t: "More", tw: 30, icon: <svg viewBox="0 0 20 4" className="h-1 w-5"><circle cx="2" cy="2" r="2" fill="currentColor" /><circle cx="10" cy="2" r="2" fill="currentColor" /><circle cx="18" cy="2" r="2" fill="currentColor" /></svg> },
];
function MeetingBar() {
  return (
    <div className="absolute top-[1004px] left-[409px] w-[827px] font-['DejaVu_Sans',sans-serif]">
      <div className="ml-[241px] flex h-[22px] w-[345px] overflow-hidden rounded-b">
        <div className="flex w-[229px] items-center bg-[#4cc800] text-[#0d2b00]">
          <svg viewBox="0 0 10 10" className="ml-4 size-2.5"><path d="M0 4l3.500-4L7 4H5.200v2C5.500 7.500 7 8 9.500 8 9 10 3 10.500 2.200 6.500V4z" fill="#136400" /></svg>
          <svg viewBox="0 0 10 11" className="ml-[26px] h-[11px] w-2.5"><path d="M5 0l5 1.500V5c0 3-2 5-5 6-3-1-5-3-5-6V1.500z" fill="#136400" /><path d="M2.500 5l2 2 3.200-3.600" fill="none" stroke="#4cc800" strokeWidth="1.300" /></svg>
          <span className="ml-[37px] flex text-[12px] leading-none"><Fit w={103}>ID: 932 4085 3573</Fit></span>
        </div>
        <div className="flex flex-1 items-center bg-[#fb3c3e] pl-5 text-[12px] leading-none text-white">
          <Fit w={60}>Stop Share</Fit>
          <span className="ml-[7px] size-2 rounded-[1px] bg-white" />
        </div>
      </div>
      <div className="flex h-[54px] rounded-b-lg border-t border-black bg-gradient-to-b from-[#28292b] to-[#1f2021] text-[12px] leading-none text-[#a9a9ab]">
        {controls.map((c) => (
          <div key={c.t} className={"flex shrink-0 flex-col items-center " + c.w}>
            <div className="flex h-[33px] items-center justify-center pt-1">{c.icon}</div>
            <div className={"flex " + (c.c ?? "") + " " + (c.low ?? "")}><Fit w={c.tw}>{c.t}</Fit></div>
          </div>
        ))}
      </div>
    </div>
  );
}

function TopBar() {
  return (
    <div className="grid h-[22px] shrink-0 grid-cols-3 items-center bg-gradient-to-b from-[#504e46] to-[#403f3a] font-['Noto_Sans',sans-serif] text-[13.500px] leading-none font-semibold text-[#dfdbd2]">
      <div className="flex items-center pb-[5px] pl-[7px]">
        <Fit w={68}>Activities</Fit>
        <ChromeLogo c="ml-5 mt-1 size-[15px]" />
        <span className="ml-[7px] flex"><Fit w={109}>Google Chrome</Fit></span>
        <span className="mt-0.5 ml-[7px] h-0 w-0 border-x-[5px] border-t-[5px] border-x-transparent border-t-[#c8c5bc]" />
      </div>
      <div className="flex justify-center pb-[7px] pl-[70px]"><Fit w={72}>Wed 19:16</Fit></div>
      <div className="flex items-center justify-end pr-[10px] pb-2">
        <ZoomFav s="size-[22px] -mb-1" />
        <svg viewBox="0 0 16 14" className="mt-1.5 ml-[30px] h-[13px] w-[15px]"><path d="M1 5q7-6 14 0" fill="none" stroke="#8b8981" strokeWidth="1.800" /><path d="M3 8q5-4.500 10 0M5.300 10.500q2.700-2.400 5.400 0" fill="none" stroke="#dfdbd2" strokeWidth="1.600" /><circle cx="8" cy="12.700" r="1.300" fill="#dfdbd2" /></svg>
        <svg viewBox="0 0 16 14" className="mt-1 ml-3 h-[14px] w-4"><path d="M0 4.500h3L6.500 1v12L3 9.500H0z" fill="#dfdbd2" /><path d="M8.500 4.500q1.800 2.500 0 5M11 2.800q3 4.200 0 8.400M13.300 1.200q4 5.800 0 11.600" fill="none" stroke="#dfdbd2" strokeWidth="1.300" /></svg>
        <svg viewBox="0 0 12 16" className="mt-1 ml-[15px] h-[15px] w-3"><path d="M1 3h10v12H1zM4 3V1h4v2" fill="none" stroke="#b8b5ac" strokeWidth="1.500" /><path d="M7 4.500L3 9.500h2.500L5 13.500l4-5.500H6.500z" fill="#dfdbd2" /></svg>
        <span className="mt-1.5 ml-3 h-0 w-0 border-x-[5px] border-t-[5px] border-x-transparent border-t-[#dfdbd2]" />
      </div>
    </div>
  );
}

export default function App() {
  return (
    <div className="relative flex h-[1080px] w-[1920px] flex-col overflow-hidden bg-[#649318] p-[5px]">
      <TopBar />
      <div className="flex min-h-0 flex-1">
        <Dock />
        <div className="flex min-w-0 flex-1 flex-col">
          <TabStrip />
          <Toolbar />
          <Bookmarks />
          <div className="flex h-[888px] shrink-0 bg-[#525659]">
            <div className="flex flex-1 pl-[471px]">
              <div className="w-[896px] shrink-0 bg-white shadow-[0_0_6px_1px_rgba(0,0,0,0.5)]"><Diagram /></div>
              <div className="mt-[158px] ml-[196px] flex h-[30px] w-[212px] items-center bg-[#232e3a] pl-[5px] font-['DejaVu_Sans',sans-serif] text-[12px] text-white">
                <Fit w={52}>Talking:</Fit>
              </div>
            </div>
            <div className="flex w-[10px] flex-col items-end bg-[#e6e6e6]">
              <div className="mt-[5px] mr-px h-0 w-0 border-x-4 border-b-4 border-x-transparent border-b-[#505050]" />
              <div className="mt-[699px] h-[129px] w-2 bg-[#b5b5b5]" />
              <div className="mt-[41px] h-0 w-0 border-x-[3px] border-t-4 border-x-transparent border-t-[#505050]" />
            </div>
          </div>
          <div className="flex flex-1 items-center border-t border-[#1a1a1a] bg-[#2d2d2d] pt-[3px] font-['Noto_Sans',sans-serif]">
            <svg viewBox="0 0 16 14" className="ml-5 h-[14px] w-4"><path d="M1.500 0h13L16 3v11H0V3z" fill="#c9a468" /><path d="M1.500 0h13L16 3H0z" fill="#e0c594" /><path d="M7 0h2v6H7z" fill="#f2e4c6" /></svg>
            <span className="ml-[13px] flex"><Fit w={134} className="text-[16px] text-white">javascript_20….zip</Fit></span>
            <svg viewBox="0 0 10 6" className="ml-[25px] h-1.5 w-2.5"><path d="M.8 5.200L5 1l4.200 4.200" fill="none" stroke="#bbb" strokeWidth="1.600" /></svg>
            <span className="ml-[18px] h-[46px] w-px bg-[#666]" />
            <div className="mr-3 ml-auto flex h-8 w-[89px] items-center justify-center rounded border border-[#d8d8d8] bg-[#383838] text-[14.500px] font-semibold text-white"><Fit w={57}>Show all</Fit></div>
            <span className="mr-2 text-[#bbb]"><Cross c="size-[11px]" /></span>
          </div>
        </div>
      </div>
      <MeetingBar />
    </div>
  );
}
